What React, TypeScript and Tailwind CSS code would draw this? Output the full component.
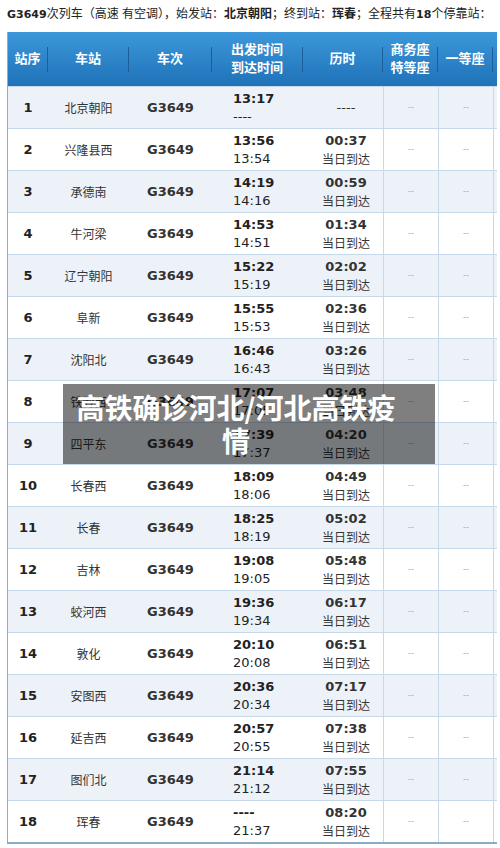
import React from "react";

type Stop = {
  no: string;
  station: string;
  depart: string;
  arrive: string;
  duration: string;
};

const stops: Stop[] = [
  { no: "1", station: "北京朝阳", depart: "13:17", arrive: "----", duration: "----" },
  { no: "2", station: "兴隆县西", depart: "13:56", arrive: "13:54", duration: "00:37" },
  { no: "3", station: "承德南", depart: "14:19", arrive: "14:16", duration: "00:59" },
  { no: "4", station: "牛河梁", depart: "14:53", arrive: "14:51", duration: "01:34" },
  { no: "5", station: "辽宁朝阳", depart: "15:22", arrive: "15:19", duration: "02:02" },
  { no: "6", station: "阜新", depart: "15:55", arrive: "15:53", duration: "02:36" },
  { no: "7", station: "沈阳北", depart: "16:46", arrive: "16:43", duration: "03:26" },
  { no: "8", station: "铁岭西", depart: "17:07", arrive: "17:05", duration: "03:48" },
  { no: "9", station: "四平东", depart: "17:39", arrive: "17:37", duration: "04:20" },
  { no: "10", station: "长春西", depart: "18:09", arrive: "18:06", duration: "04:49" },
  { no: "11", station: "长春", depart: "18:25", arrive: "18:19", duration: "05:02" },
  { no: "12", station: "吉林", depart: "19:08", arrive: "19:05", duration: "05:48" },
  { no: "13", station: "蛟河西", depart: "19:36", arrive: "19:34", duration: "06:17" },
  { no: "14", station: "敦化", depart: "20:10", arrive: "20:08", duration: "06:51" },
  { no: "15", station: "安图西", depart: "20:36", arrive: "20:34", duration: "07:17" },
  { no: "16", station: "延吉西", depart: "20:57", arrive: "20:55", duration: "07:38" },
  { no: "17", station: "图们北", depart: "21:14", arrive: "21:12", duration: "07:55" },
  { no: "18", station: "珲春", depart: "----", arrive: "21:37", duration: "08:20" },
];

const font = "font-['DejaVu_Sans','Noto_Sans_CJK_SC',sans-serif]";
const cols = "grid grid-cols-[40px_81px_83px_91px_80px_55px_55px_4px]";

function HeaderCell({ children, last }: { children: React.ReactNode; last?: boolean }) {
  return (
    <div className="flex items-center">
      <div className="flex-1 text-center text-[13px] font-bold leading-[18px] text-white">{children}</div>
      {!last && <div className="h-[25px] w-px bg-[#1b5e98]" />}
    </div>
  );
}

export default function App() {
  return (
    <div className={`relative w-[500px] bg-white ${font}`}>
      <p className="m-0 h-[32px] overflow-hidden whitespace-nowrap pl-[7px] pt-[6px] text-[12px] leading-[16px] text-[#222] font-['Liberation_Sans','Noto_Sans_CJK_SC',sans-serif]">
        <b className="font-['DejaVu_Sans'] text-[11px]">G3649</b>次列车（高速 有空调），始发站：<b>北京朝阳</b>；终到站：<b>珲春</b>；全程共有
        <b className="font-['DejaVu_Sans'] text-[11px]">18</b>个停靠站：
      </p>

      <div className="ml-[7px] w-[490px] border-b-2 border-l border-[#8aaec8]">
        <div className={`${cols} h-[54px] bg-linear-to-b from-[#3c98da] to-[#1f72b8]`}>
          <HeaderCell>站序</HeaderCell>
          <HeaderCell>车站</HeaderCell>
          <HeaderCell>车次</HeaderCell>
          <HeaderCell>
            出发时间
            <br />
            到达时间
          </HeaderCell>
          <HeaderCell>历时</HeaderCell>
          <HeaderCell>
            商务座
            <br />
            特等座
          </HeaderCell>
          <HeaderCell>一等座</HeaderCell>
          <HeaderCell last>{""}</HeaderCell>
        </div>

        {stops.map((s, i) => (
          <div
            key={s.no}
            className={`${cols} h-[42px] border-t border-[#c6d9ea] first:border-t-0 ${i % 2 === 0 ? "bg-[#edf2f9]" : "bg-white"}`}
          >
            <div className="flex items-center justify-center text-[13px] font-bold text-[#222]">{s.no}</div>
            <div className="flex items-center justify-center text-[12px] text-[#333] font-['Noto_Sans_CJK_SC',serif]">
              {s.station}
            </div>
            <div className="flex items-center justify-center text-[13px] font-bold text-[#333]">G3649</div>
            <div className="flex flex-col justify-center pl-[21px] text-[13px] leading-[18px] text-[#222]">
              <span className="font-bold">{s.depart}</span>
              <span>{s.arrive}</span>
            </div>
            <div className="flex flex-col items-center justify-center pl-[6px] leading-[18px] text-[#333]">
              {s.duration === "----" ? (
                <span className="text-[13px]">----</span>
              ) : (
                <>
                  <span className="text-[13px] font-bold">{s.duration}</span>
                  <span className="text-[12px] font-['Noto_Sans_CJK_SC',sans-serif]">当日到达</span>
                </>
              )}
            </div>
            <div className="flex items-center justify-center border-l border-[#c6d9ea] text-[8px] text-[#aaa]">--</div>
            <div className="flex items-center justify-center border-l border-[#c6d9ea] text-[8px] text-[#aaa]">--</div>
            <div className="border-l border-[#c6d9ea]" />
          </div>
        ))}
      </div>

      <div className="absolute left-[63px] top-[384px] flex h-[80px] w-[372px] items-center justify-center bg-black/50 pl-[10px] pr-[36px]">
        <p className="m-0 text-center text-[28px] font-bold leading-[33px] text-white font-['Noto_Sans_CJK_SC',sans-serif]">
          高铁确诊河北/河北高铁疫情
        </p>
      </div>
    </div>
  );
}
